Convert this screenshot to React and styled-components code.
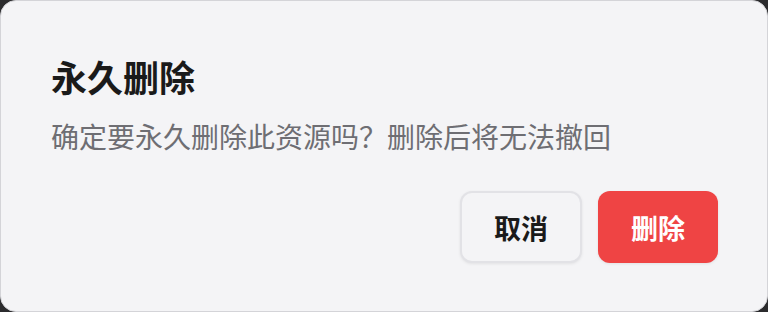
import React from 'react';
import styled, { createGlobalStyle } from 'styled-components';

const GlobalStyle = createGlobalStyle`
  html, body {
    margin: 0;
    padding: 0;
    background: #2b2b2d;
  }
  * {
    box-sizing: border-box;
  }
`;

const Dialog = styled.div`
  width: 768px;
  height: 312px;
  background: #f4f4f6;
  border: 1px solid #d4d4d8;
  border-radius: 16px;
  padding: 53px 49px 0 50px;
  display: flex;
  flex-direction: column;
  font-family: 'Noto Sans CJK SC', 'Noto Sans', sans-serif;
`;

const Title = styled.h2`
  margin: 0;
  font-size: 36px;
  line-height: 44px;
  font-weight: 700;
  color: #1a1a1a;
`;

const Message = styled.p`
  margin: 20px 0 0 0;
  font-size: 28px;
  line-height: 36px;
  color: #6e6e73;
`;

const Actions = styled.div`
  display: flex;
  justify-content: flex-end;
  gap: 16px;
  margin-top: 37px;
`;

const Button = styled.button`
  width: ${(p) => (p.$danger ? '120px' : '122px')};
  height: 72px;
  border-radius: 12px;
  font-family: inherit;
  font-size: 27px;
  font-weight: 700;
  cursor: pointer;
  border: ${(p) => (p.$danger ? 'none' : '2px solid #e2e2e6')};
  background: ${(p) => (p.$danger ? '#ef4444' : '#f4f4f6')};
  color: ${(p) => (p.$danger ? '#ffffff' : '#1a1a1a')};
  box-shadow: 0 1px 3px rgba(0, 0, 0, 0.08);
`;

export default function App() {
  return (
    <>
      <GlobalStyle />
      <Dialog>
        <Title>永久删除</Title>
        <Message>确定要永久删除此资源吗？删除后将无法撤回</Message>
        <Actions>
          <Button>取消</Button>
          <Button $danger>删除</Button>
        </Actions>
      </Dialog>
    </>
  );
}
